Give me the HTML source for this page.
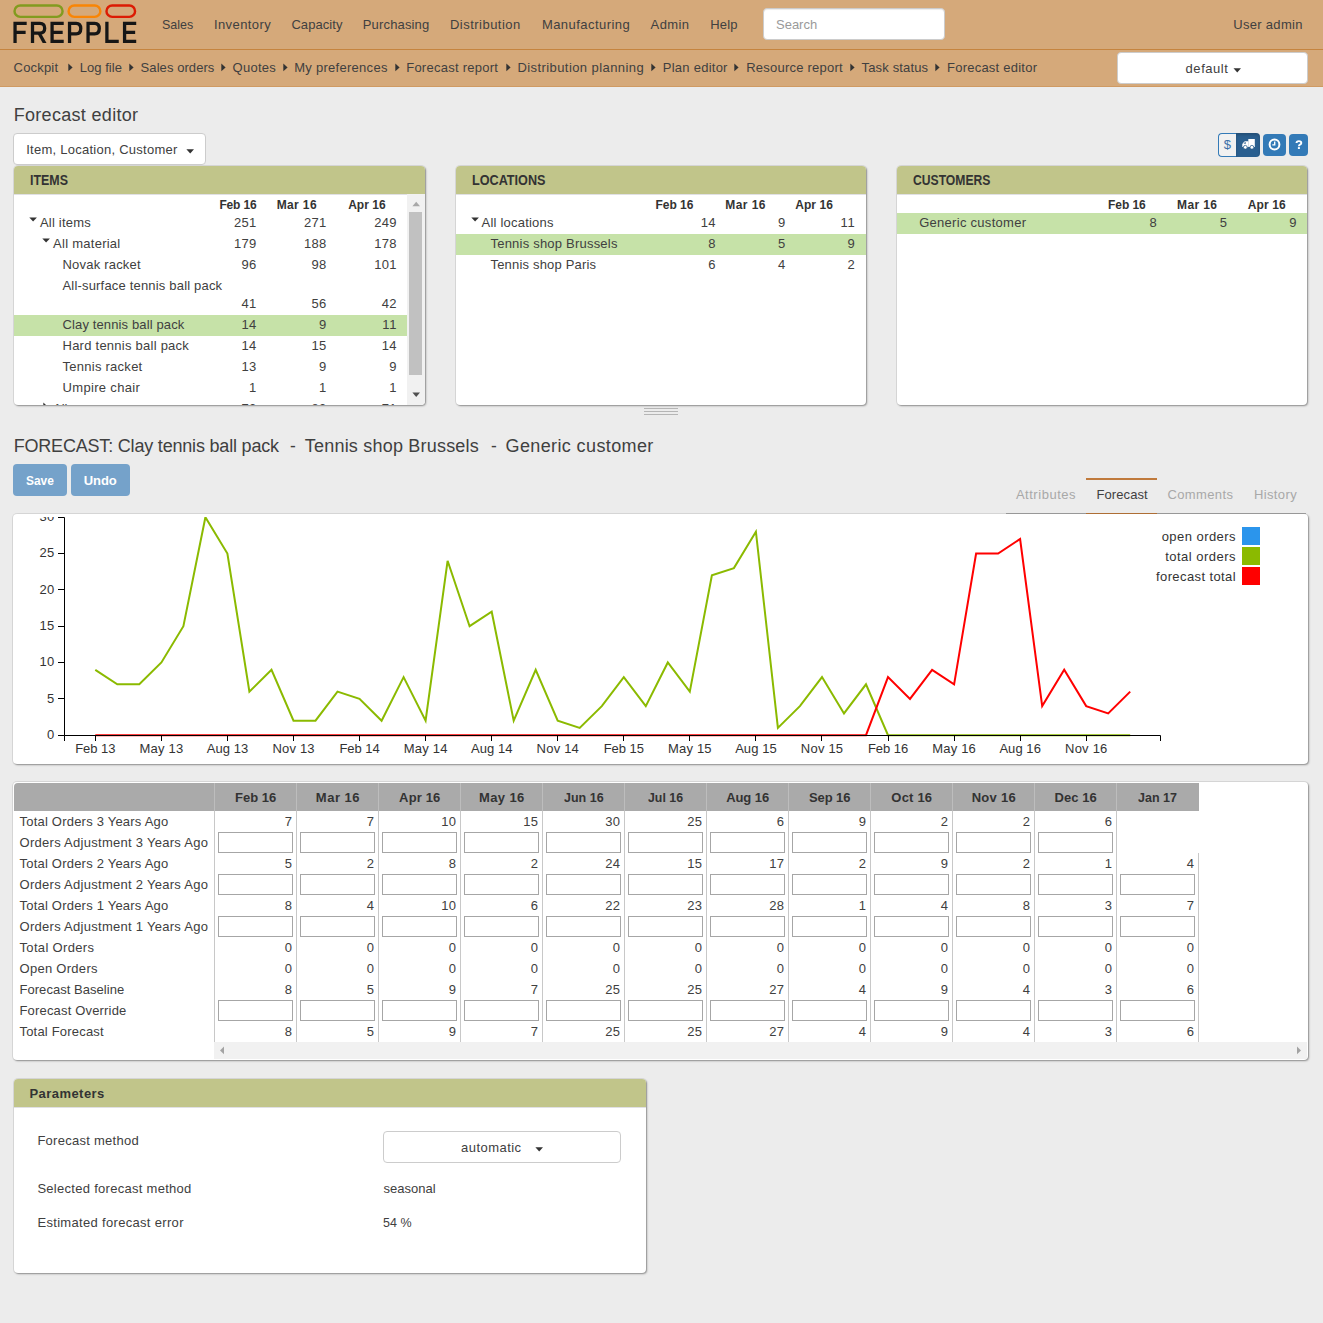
<!DOCTYPE html><html><head><meta charset="utf-8"><title>Forecast editor - frePPLe</title><style>
html,body{margin:0;padding:0;}
body{width:1323px;height:1323px;background:#ececec;font-family:"Liberation Sans",sans-serif;font-size:13px;color:#404040;position:relative;overflow:hidden;}
.t{position:absolute;white-space:pre;line-height:20px;}
.abs{position:absolute;}
.panel{position:absolute;background:#fff;border-radius:4px;box-shadow:0 0 0 1px rgba(0,0,0,.075), 1px 1px 2px rgba(0,0,0,.36);}
.phead{position:absolute;left:0;top:0;right:0;height:28px;background:#c1c58a;border-radius:4px 4px 0 0;border-bottom:1px solid #e0e0e4;}
.hl{position:absolute;background:#c6e2a8;}
.inp{position:absolute;box-sizing:border-box;width:75px;height:21px;border:1px solid #a6a6a6;background:#fff;}
.vsep{position:absolute;width:1px;background:#c8c8c8;}
.btn{position:absolute;box-sizing:border-box;border-radius:4px;}
</style></head><body>
<header class="abs" style="left:0;top:0;width:1323px;height:87px;background:#d5a97a;">
<div class="abs" style="left:0;top:49px;width:1323px;height:1px;background:#c5843f;"></div>
<div class="abs" style="left:0;top:86px;width:1323px;height:1px;background:#cf9a63;"></div>
<svg class="abs" style="left:5px;top:0;" width="140" height="50" viewBox="0 0 1323 472">
<g fill="none" stroke-width="23">
<rect x="90" y="51" width="454" height="108" rx="54" stroke="#829b1f"/>
<rect x="601" y="51" width="300" height="108" rx="54" stroke="#f98505"/>
<rect x="959" y="51" width="270" height="108" rx="54" stroke="#dc1b03"/>
</g>
<g fill="none" stroke="#161616" stroke-width="31" stroke-linejoin="miter">
<path d="M95 405V220H205M95 306H195"/>
<path d="M260 405V220H330Q375 220 375 266Q375 312 330 312H260"/><path d="M308 318H343L392 405H356Z" fill="#161616" stroke="none"/>
<path d="M555 220H445V390H555M445 305H545"/>
<path d="M610 405V220H672Q716 220 716 270Q716 320 672 320H610"/>
<path d="M785 405V220H847Q891 220 891 270Q891 320 847 320H785"/>
<path d="M963 205V390H1075"/>
<path d="M1240 220H1130V390H1240M1130 305H1230"/>
</g></svg>
<nav>
<span class="t" style="left:162.00px;top:15.00px;font-size:13px;letter-spacing:0.000px;color:#404040;transform:scaleX(0.9591);transform-origin:0 0;">Sales</span>
<span class="t" style="left:213.90px;top:15.00px;font-size:13px;letter-spacing:0.424px;color:#404040;">Inventory</span>
<span class="t" style="left:291.40px;top:15.00px;font-size:13px;letter-spacing:0.078px;color:#404040;">Capacity</span>
<span class="t" style="left:362.80px;top:15.00px;font-size:13px;letter-spacing:0.155px;color:#404040;">Purchasing</span>
<span class="t" style="left:450.00px;top:15.00px;font-size:13px;letter-spacing:0.472px;color:#404040;">Distribution</span>
<span class="t" style="left:541.90px;top:15.00px;font-size:13px;letter-spacing:0.455px;color:#404040;">Manufacturing</span>
<span class="t" style="left:650.60px;top:15.00px;font-size:13px;letter-spacing:0.408px;color:#404040;">Admin</span>
<span class="t" style="left:710.20px;top:15.00px;font-size:13px;letter-spacing:0.188px;color:#404040;">Help</span>
</nav>
<div class="abs" style="left:763px;top:8px;width:182px;height:32px;background:#fff;border-radius:4px;box-sizing:border-box;border:1px solid #ccc;box-shadow:inset 0 1px 1px rgba(0,0,0,.075);"></div>
<span class="t" style="left:776.00px;top:15.00px;font-size:13px;letter-spacing:-0.012px;color:#9a9a9a;">Search</span>
<span class="t" style="left:1233.20px;top:15.00px;font-size:13px;letter-spacing:0.313px;color:#404040;">User admin</span>
<span class="t" style="left:13.60px;top:58.00px;font-size:13px;letter-spacing:0.177px;color:#404040;">Cockpit</span>
<svg class="abs" style="left:67.6px;top:63px;" width="6" height="9" viewBox="0 0 6 9"><path d="M0.3 0.6L4.6 4.4L0.3 8.2Z" fill="#333"/></svg>
<span class="t" style="left:79.70px;top:58.00px;font-size:13px;letter-spacing:0.047px;color:#404040;">Log file</span>
<svg class="abs" style="left:129.0px;top:63px;" width="6" height="9" viewBox="0 0 6 9"><path d="M0.3 0.6L4.6 4.4L0.3 8.2Z" fill="#333"/></svg>
<span class="t" style="left:140.60px;top:58.00px;font-size:13px;letter-spacing:0.068px;color:#404040;">Sales orders</span>
<svg class="abs" style="left:221.0px;top:63px;" width="6" height="9" viewBox="0 0 6 9"><path d="M0.3 0.6L4.6 4.4L0.3 8.2Z" fill="#333"/></svg>
<span class="t" style="left:232.60px;top:58.00px;font-size:13px;letter-spacing:0.246px;color:#404040;">Quotes</span>
<svg class="abs" style="left:283.0px;top:63px;" width="6" height="9" viewBox="0 0 6 9"><path d="M0.3 0.6L4.6 4.4L0.3 8.2Z" fill="#333"/></svg>
<span class="t" style="left:294.20px;top:58.00px;font-size:13px;letter-spacing:0.279px;color:#404040;">My preferences</span>
<svg class="abs" style="left:395.0px;top:63px;" width="6" height="9" viewBox="0 0 6 9"><path d="M0.3 0.6L4.6 4.4L0.3 8.2Z" fill="#333"/></svg>
<span class="t" style="left:406.20px;top:58.00px;font-size:13px;letter-spacing:0.256px;color:#404040;">Forecast report</span>
<svg class="abs" style="left:505.7px;top:63px;" width="6" height="9" viewBox="0 0 6 9"><path d="M0.3 0.6L4.6 4.4L0.3 8.2Z" fill="#333"/></svg>
<span class="t" style="left:517.40px;top:58.00px;font-size:13px;letter-spacing:0.424px;color:#404040;">Distribution planning</span>
<svg class="abs" style="left:650.9px;top:63px;" width="6" height="9" viewBox="0 0 6 9"><path d="M0.3 0.6L4.6 4.4L0.3 8.2Z" fill="#333"/></svg>
<span class="t" style="left:662.80px;top:58.00px;font-size:13px;letter-spacing:0.249px;color:#404040;">Plan editor</span>
<svg class="abs" style="left:734.4px;top:63px;" width="6" height="9" viewBox="0 0 6 9"><path d="M0.3 0.6L4.6 4.4L0.3 8.2Z" fill="#333"/></svg>
<span class="t" style="left:746.20px;top:58.00px;font-size:13px;letter-spacing:0.232px;color:#404040;">Resource report</span>
<svg class="abs" style="left:850.0px;top:63px;" width="6" height="9" viewBox="0 0 6 9"><path d="M0.3 0.6L4.6 4.4L0.3 8.2Z" fill="#333"/></svg>
<span class="t" style="left:861.60px;top:58.00px;font-size:13px;letter-spacing:0.143px;color:#404040;">Task status</span>
<svg class="abs" style="left:935.2px;top:63px;" width="6" height="9" viewBox="0 0 6 9"><path d="M0.3 0.6L4.6 4.4L0.3 8.2Z" fill="#333"/></svg>
<span class="t" style="left:947.00px;top:58.00px;font-size:13px;letter-spacing:0.233px;color:#404040;">Forecast editor</span>
<div class="abs" style="left:1117px;top:52px;width:191px;height:32px;background:#fff;border-radius:4px;box-sizing:border-box;border:1px solid #ccc;"></div>
<span class="t" style="left:1185.60px;top:59.00px;font-size:13px;letter-spacing:0.536px;color:#404040;">default</span>
<svg class="abs" style="left:1232.5px;top:67.6px;" width="9" height="5" viewBox="0 0 9 5"><path d="M0.5 0.3H8L4.25 4.5Z" fill="#333"/></svg>
</header>
<span class="t" style="left:13.70px;top:105.00px;font-size:18px;letter-spacing:0.309px;color:#404040;">Forecast editor</span>
<div class="btn" style="left:13px;top:133px;width:193px;height:32px;background:#fff;border:1px solid #ccc;"></div>
<span class="t" style="left:26.20px;top:140.00px;font-size:13px;letter-spacing:0.257px;color:#404040;">Item, Location, Customer</span>
<svg class="abs" style="left:185.5px;top:149px;" width="9" height="5" viewBox="0 0 9 5"><path d="M0.4 0.3H8L4.2 4.5Z" fill="#333"/></svg>
<div class="btn" style="left:1218px;top:133px;width:18px;height:24px;background:#f1f1f1;border:1px solid #337ab7;border-radius:4px 0 0 4px;border-right:none;"></div>
<div class="btn" style="left:1236px;top:133px;width:24px;height:24px;background:#2a5f8f;border-radius:0 4px 4px 0;box-shadow:inset 0 2px 3px rgba(0,0,0,.18);"></div>
<div class="btn" style="left:1263px;top:134px;width:23px;height:22px;background:#337ab7;"></div>
<div class="btn" style="left:1289px;top:134px;width:19px;height:22px;background:#337ab7;"></div>
<span class="t" style="left:1223.80px;top:135.00px;font-size:13px;letter-spacing:-0.004px;color:#3b6fa8;">$</span>
<svg class="abs" style="left:1242px;top:139px;" width="13" height="10" viewBox="0 0 13 10">
<path d="M6.3 0H12.8V8H6.3Z" fill="#fff"/><path d="M6.4 2.2H3.1Q2.5 2.2 2.1 2.7L0.3 4.9V8H6.4Z" fill="#fff"/>
<circle cx="3.3" cy="8.3" r="1.9" fill="#fff" stroke="#2a5f8f" stroke-width="0.8"/><circle cx="9.9" cy="8.3" r="1.9" fill="#fff" stroke="#2a5f8f" stroke-width="0.8"/>
<path d="M1.5 4.7L2.7 3.2H4V4.7Z" fill="#2a5f8f" opacity="0.8"/></svg>
<svg class="abs" style="left:1268px;top:138px;" width="13" height="13" viewBox="0 0 13 13"><circle cx="6.5" cy="6.5" r="4.9" fill="none" stroke="#fff" stroke-width="2"/><path d="M6.7 3.4V6.9H4.3" fill="none" stroke="#fff" stroke-width="1.4"/></svg>
<svg class="abs" style="left:1295px;top:140px;" width="8" height="10" viewBox="0 0 8 10"><path d="M1.5 3.1Q1.5 1.1 3.9 1.1Q6.3 1.1 6.3 3Q6.3 4.1 5 4.7Q3.9 5.2 3.9 6.3" fill="none" stroke="#fff" stroke-width="1.9"/><rect x="2.9" y="7.1" width="2" height="1.9" fill="#fff"/></svg>
<section class="panel" style="left:14px;top:166px;width:411px;height:239px;"><div class="phead"></div></section>
<span class="t" style="left:29.50px;top:170.00px;font-size:14px;letter-spacing:0.000px;color:#333;font-weight:700;transform:scaleX(0.8859);transform-origin:0 0;">ITEMS</span>
<section class="panel" style="left:456px;top:166px;width:410px;height:239px;"><div class="phead"></div></section>
<span class="t" style="left:471.60px;top:170.00px;font-size:14px;letter-spacing:0.000px;color:#333;font-weight:700;transform:scaleX(0.9029);transform-origin:0 0;">LOCATIONS</span>
<section class="panel" style="left:897px;top:166px;width:410px;height:239px;"><div class="phead"></div></section>
<span class="t" style="left:912.60px;top:170.00px;font-size:14px;letter-spacing:0.000px;color:#333;font-weight:700;transform:scaleX(0.8677);transform-origin:0 0;">CUSTOMERS</span>
<span class="t" style="left:219.40px;top:195.00px;font-size:12px;letter-spacing:-0.136px;color:#333;font-weight:700;">Feb 16</span>
<span class="t" style="left:276.70px;top:195.00px;font-size:12px;letter-spacing:0.378px;color:#333;font-weight:700;">Mar 16</span>
<span class="t" style="left:348.20px;top:195.00px;font-size:12px;letter-spacing:0.007px;color:#333;font-weight:700;">Apr 16</span>
<div class="hl" style="left:14px;top:315px;width:393px;height:21px;"></div>
<svg class="abs" style="left:29.0px;top:216.8px;" width="9" height="6" viewBox="0 0 9 6"><path d="M0.3 0.4H7.9L4.1 4.6Z" fill="#333"/></svg>
<svg class="abs" style="left:41.8px;top:237.8px;" width="9" height="6" viewBox="0 0 9 6"><path d="M0.3 0.4H7.9L4.1 4.6Z" fill="#333"/></svg>
<span class="t" style="left:39.90px;top:213.00px;font-size:13px;letter-spacing:0.219px;color:#404040;">All items</span>
<span class="t" style="left:234.10px;top:213.00px;font-size:13px;letter-spacing:0.199px;color:#404040;">251</span>
<span class="t" style="left:304.10px;top:213.00px;font-size:13px;letter-spacing:0.199px;color:#404040;">271</span>
<span class="t" style="left:374.30px;top:213.00px;font-size:13px;letter-spacing:0.199px;color:#404040;">249</span>
<span class="t" style="left:53.10px;top:234.00px;font-size:13px;letter-spacing:0.259px;color:#404040;">All material</span>
<span class="t" style="left:234.10px;top:234.00px;font-size:13px;letter-spacing:0.199px;color:#404040;">179</span>
<span class="t" style="left:304.10px;top:234.00px;font-size:13px;letter-spacing:0.199px;color:#404040;">188</span>
<span class="t" style="left:374.30px;top:234.00px;font-size:13px;letter-spacing:0.199px;color:#404040;">178</span>
<span class="t" style="left:62.50px;top:255.00px;font-size:13px;letter-spacing:0.202px;color:#404040;">Novak racket</span>
<span class="t" style="left:241.53px;top:255.00px;font-size:13px;letter-spacing:0.199px;color:#404040;">96</span>
<span class="t" style="left:311.53px;top:255.00px;font-size:13px;letter-spacing:0.199px;color:#404040;">98</span>
<span class="t" style="left:374.30px;top:255.00px;font-size:13px;letter-spacing:0.199px;color:#404040;">101</span>
<span class="t" style="left:62.50px;top:276.00px;font-size:13px;letter-spacing:0.184px;color:#404040;">All-surface tennis ball pack</span>
<span class="t" style="left:241.53px;top:294.00px;font-size:13px;letter-spacing:0.199px;color:#404040;">41</span>
<span class="t" style="left:311.53px;top:294.00px;font-size:13px;letter-spacing:0.199px;color:#404040;">56</span>
<span class="t" style="left:381.73px;top:294.00px;font-size:13px;letter-spacing:0.199px;color:#404040;">42</span>
<span class="t" style="left:62.50px;top:315.00px;font-size:13px;letter-spacing:0.127px;color:#404040;">Clay tennis ball pack</span>
<span class="t" style="left:241.53px;top:315.00px;font-size:13px;letter-spacing:0.199px;color:#404040;">14</span>
<span class="t" style="left:318.97px;top:315.00px;font-size:13px;letter-spacing:0.199px;color:#404040;">9</span>
<span class="t" style="left:382.22px;top:315.00px;font-size:13px;letter-spacing:0.683px;color:#404040;">11</span>
<span class="t" style="left:62.50px;top:336.00px;font-size:13px;letter-spacing:0.247px;color:#404040;">Hard tennis ball pack</span>
<span class="t" style="left:241.53px;top:336.00px;font-size:13px;letter-spacing:0.199px;color:#404040;">14</span>
<span class="t" style="left:311.53px;top:336.00px;font-size:13px;letter-spacing:0.199px;color:#404040;">15</span>
<span class="t" style="left:381.73px;top:336.00px;font-size:13px;letter-spacing:0.199px;color:#404040;">14</span>
<span class="t" style="left:62.50px;top:357.00px;font-size:13px;letter-spacing:0.262px;color:#404040;">Tennis racket</span>
<span class="t" style="left:241.53px;top:357.00px;font-size:13px;letter-spacing:0.199px;color:#404040;">13</span>
<span class="t" style="left:318.97px;top:357.00px;font-size:13px;letter-spacing:0.199px;color:#404040;">9</span>
<span class="t" style="left:389.17px;top:357.00px;font-size:13px;letter-spacing:0.199px;color:#404040;">9</span>
<span class="t" style="left:62.50px;top:378.00px;font-size:13px;letter-spacing:0.334px;color:#404040;">Umpire chair</span>
<span class="t" style="left:248.97px;top:378.00px;font-size:13px;letter-spacing:0.199px;color:#404040;">1</span>
<span class="t" style="left:318.97px;top:378.00px;font-size:13px;letter-spacing:0.199px;color:#404040;">1</span>
<span class="t" style="left:389.17px;top:378.00px;font-size:13px;letter-spacing:0.199px;color:#404040;">1</span>
<div class="abs" style="left:14px;top:396px;width:393px;height:9px;overflow:hidden;">
<div class="abs" style="left:-14px;top:-396px;">
<svg class="abs" style="left:42.5px;top:402px;" width="6" height="9" viewBox="0 0 6 9"><path d="M0.3 0.6L4.6 4.4L0.3 8.2Z" fill="#333"/></svg>
<span class="t" style="left:53.10px;top:399.00px;font-size:13px;letter-spacing:-0.105px;color:#404040;">All access</span>
<span class="t" style="left:241.53px;top:399.00px;font-size:13px;letter-spacing:0.199px;color:#404040;">72</span>
<span class="t" style="left:311.53px;top:399.00px;font-size:13px;letter-spacing:0.199px;color:#404040;">83</span>
<span class="t" style="left:381.73px;top:399.00px;font-size:13px;letter-spacing:0.199px;color:#404040;">71</span>
</div></div>
<div class="abs" style="left:407px;top:194px;width:18px;height:211px;background:#f1f1f1;border-radius:0 0 4px 0;"></div>
<div class="abs" style="left:409px;top:212px;width:13px;height:163px;background:#c1c1c1;"></div>
<svg class="abs" style="left:411.5px;top:201px;" width="9" height="6" viewBox="0 0 9 6"><path d="M0.4 5.2L4.2 0.8L8 5.2Z" fill="#a8a8a8"/></svg>
<svg class="abs" style="left:411.5px;top:392.3px;" width="9" height="6" viewBox="0 0 9 6"><path d="M0.4 0.6H8L4.2 5Z" fill="#505050"/></svg>
<span class="t" style="left:655.50px;top:195.00px;font-size:12px;letter-spacing:-0.019px;color:#333;font-weight:700;">Feb 16</span>
<span class="t" style="left:725.30px;top:195.00px;font-size:12px;letter-spacing:0.428px;color:#333;font-weight:700;">Mar 16</span>
<span class="t" style="left:795.20px;top:195.00px;font-size:12px;letter-spacing:0.090px;color:#333;font-weight:700;">Apr 16</span>
<div class="hl" style="left:456px;top:234px;width:410px;height:21px;"></div>
<svg class="abs" style="left:470.8px;top:216.8px;" width="9" height="6" viewBox="0 0 9 6"><path d="M0.3 0.4H7.9L4.1 4.6Z" fill="#333"/></svg>
<span class="t" style="left:481.60px;top:213.00px;font-size:13px;letter-spacing:0.210px;color:#404040;">All locations</span>
<span class="t" style="left:700.73px;top:213.00px;font-size:13px;letter-spacing:0.199px;color:#404040;">14</span>
<span class="t" style="left:777.97px;top:213.00px;font-size:13px;letter-spacing:0.199px;color:#404040;">9</span>
<span class="t" style="left:840.62px;top:213.00px;font-size:13px;letter-spacing:0.683px;color:#404040;">11</span>
<span class="t" style="left:490.50px;top:234.00px;font-size:13px;letter-spacing:0.213px;color:#404040;">Tennis shop Brussels</span>
<span class="t" style="left:708.17px;top:234.00px;font-size:13px;letter-spacing:0.199px;color:#404040;">8</span>
<span class="t" style="left:777.97px;top:234.00px;font-size:13px;letter-spacing:0.199px;color:#404040;">5</span>
<span class="t" style="left:847.57px;top:234.00px;font-size:13px;letter-spacing:0.199px;color:#404040;">9</span>
<span class="t" style="left:490.50px;top:255.00px;font-size:13px;letter-spacing:0.187px;color:#404040;">Tennis shop Paris</span>
<span class="t" style="left:708.17px;top:255.00px;font-size:13px;letter-spacing:0.199px;color:#404040;">6</span>
<span class="t" style="left:777.97px;top:255.00px;font-size:13px;letter-spacing:0.199px;color:#404040;">4</span>
<span class="t" style="left:847.57px;top:255.00px;font-size:13px;letter-spacing:0.199px;color:#404040;">2</span>
<div class="abs" style="left:644px;top:408px;width:34px;height:1px;background:#b5b5b5;"></div>
<div class="abs" style="left:644px;top:411px;width:34px;height:1px;background:#b5b5b5;"></div>
<div class="abs" style="left:644px;top:414px;width:34px;height:1px;background:#b5b5b5;"></div>
<span class="t" style="left:1108.10px;top:195.00px;font-size:12px;letter-spacing:-0.069px;color:#333;font-weight:700;">Feb 16</span>
<span class="t" style="left:1177.00px;top:195.00px;font-size:12px;letter-spacing:0.395px;color:#333;font-weight:700;">Mar 16</span>
<span class="t" style="left:1247.80px;top:195.00px;font-size:12px;letter-spacing:0.090px;color:#333;font-weight:700;">Apr 16</span>
<div class="hl" style="left:897px;top:213px;width:410px;height:21px;"></div>
<span class="t" style="left:919.20px;top:213.00px;font-size:13px;letter-spacing:0.282px;color:#404040;">Generic customer</span>
<span class="t" style="left:1149.57px;top:213.00px;font-size:13px;letter-spacing:0.199px;color:#404040;">8</span>
<span class="t" style="left:1219.67px;top:213.00px;font-size:13px;letter-spacing:0.199px;color:#404040;">5</span>
<span class="t" style="left:1289.27px;top:213.00px;font-size:13px;letter-spacing:0.199px;color:#404040;">9</span>
<span class="t" style="left:13.70px;top:436.00px;font-size:18px;letter-spacing:-0.191px;color:#404040;">FORECAST: Clay tennis ball pack</span>
<span class="t" style="left:289.60px;top:436.00px;font-size:18px;letter-spacing:0.000px;color:#404040;transform:scaleX(0.9653);transform-origin:0 0;">-</span>
<span class="t" style="left:304.80px;top:436.00px;font-size:18px;letter-spacing:0.205px;color:#404040;">Tennis shop Brussels</span>
<span class="t" style="left:490.80px;top:436.00px;font-size:18px;letter-spacing:0.000px;color:#404040;transform:scaleX(0.9653);transform-origin:0 0;">-</span>
<span class="t" style="left:505.50px;top:436.00px;font-size:18px;letter-spacing:0.384px;color:#404040;">Generic customer</span>
<div class="btn" style="left:13px;top:464px;width:54px;height:32px;background:#75a2ca;"></div>
<div class="btn" style="left:71px;top:464px;width:59px;height:32px;background:#75a2ca;"></div>
<span class="t" style="left:26.20px;top:471.00px;font-size:13px;letter-spacing:0.000px;color:#fff;font-weight:700;transform:scaleX(0.9185);transform-origin:0 0;">Save</span>
<span class="t" style="left:83.80px;top:471.00px;font-size:13px;letter-spacing:-0.080px;color:#fff;font-weight:700;">Undo</span>
<div class="abs" style="left:1006px;top:513px;width:300px;height:1px;background:#a9a9a9;"></div>
<div class="abs" style="left:1086px;top:478px;width:71px;height:2px;background:#c07a3c;"></div>
<div class="abs" style="left:1086px;top:512.5px;width:71px;height:1.5px;background:#c07a3c;"></div>
<span class="t" style="left:1015.90px;top:485.00px;font-size:13px;letter-spacing:0.528px;color:#a8a8a8;">Attributes</span>
<span class="t" style="left:1096.50px;top:485.00px;font-size:13px;letter-spacing:0.090px;color:#404040;">Forecast</span>
<span class="t" style="left:1167.40px;top:485.00px;font-size:13px;letter-spacing:0.393px;color:#a8a8a8;">Comments</span>
<span class="t" style="left:1254.00px;top:485.00px;font-size:13px;letter-spacing:0.364px;color:#a8a8a8;">History</span>
<section class="panel" style="left:13px;top:514px;width:1295px;height:250px;"></section>
<svg class="abs" style="left:0;top:517px;" width="1323" height="250" viewBox="0 517 1323 250"><polyline points="95.3,669.8 117.3,684.3 139.3,684.3 161.4,662.5 183.4,626.2 205.4,517.2 227.4,553.5 249.4,691.6 271.5,669.8 293.5,720.7 315.5,720.7 337.5,691.6 359.5,698.9 381.6,720.7 403.6,677.1 425.6,720.7 447.6,560.8 469.6,626.2 491.7,611.7 513.7,720.7 535.7,669.8 557.7,720.7 579.7,727.9 601.8,706.1 623.8,677.1 645.8,706.1 667.8,662.5 689.8,691.6 711.9,575.3 733.9,568.1 755.9,531.7 777.9,727.9 799.9,706.1 822.0,677.1 844.0,713.4 866.0,684.3 888.0,735.2 910.0,735.2 932.1,735.2 954.1,735.2 976.1,735.2 998.1,735.2 1020.1,735.2 1042.2,735.2 1064.2,735.2 1086.2,735.2 1108.2,735.2 1130.2,735.2" fill="none" stroke="#8bba00" stroke-width="2"/><polyline points="95.3,735.2 117.3,735.2 139.3,735.2 161.4,735.2 183.4,735.2 205.4,735.2 227.4,735.2 249.4,735.2 271.5,735.2 293.5,735.2 315.5,735.2 337.5,735.2 359.5,735.2 381.6,735.2 403.6,735.2 425.6,735.2 447.6,735.2 469.6,735.2 491.7,735.2 513.7,735.2 535.7,735.2 557.7,735.2 579.7,735.2 601.8,735.2 623.8,735.2 645.8,735.2 667.8,735.2 689.8,735.2 711.9,735.2 733.9,735.2 755.9,735.2 777.9,735.2 799.9,735.2 822.0,735.2 844.0,735.2 866.0,735.2 888.0,677.1 910.0,698.9 932.1,669.8 954.1,684.3 976.1,553.5 998.1,553.5 1020.1,539.0 1042.2,706.1 1064.2,669.8 1086.2,706.1 1108.2,713.4 1130.2,691.6" fill="none" stroke="#ff0000" stroke-width="2"/><path d="M58 517.5H64.5V735.5H58" fill="none" stroke="#000" stroke-width="1"/><path d="M58 698.5H64.5" stroke="#000" stroke-width="1"/><path d="M58 662.5H64.5" stroke="#000" stroke-width="1"/><path d="M58 626.5H64.5" stroke="#000" stroke-width="1"/><path d="M58 589.5H64.5" stroke="#000" stroke-width="1"/><path d="M58 553.5H64.5" stroke="#000" stroke-width="1"/><path d="M64.5 741V735.5H1160.5V741" fill="none" stroke="#000" stroke-width="1"/><path d="M95.5 735.5V741" stroke="#000" stroke-width="1"/><path d="M161.5 735.5V741" stroke="#000" stroke-width="1"/><path d="M227.5 735.5V741" stroke="#000" stroke-width="1"/><path d="M293.5 735.5V741" stroke="#000" stroke-width="1"/><path d="M359.5 735.5V741" stroke="#000" stroke-width="1"/><path d="M425.5 735.5V741" stroke="#000" stroke-width="1"/><path d="M491.5 735.5V741" stroke="#000" stroke-width="1"/><path d="M557.5 735.5V741" stroke="#000" stroke-width="1"/><path d="M623.5 735.5V741" stroke="#000" stroke-width="1"/><path d="M689.5 735.5V741" stroke="#000" stroke-width="1"/><path d="M755.5 735.5V741" stroke="#000" stroke-width="1"/><path d="M821.5 735.5V741" stroke="#000" stroke-width="1"/><path d="M888.5 735.5V741" stroke="#000" stroke-width="1"/><path d="M954.5 735.5V741" stroke="#000" stroke-width="1"/><path d="M1020.5 735.5V741" stroke="#000" stroke-width="1"/><path d="M1086.5 735.5V741" stroke="#000" stroke-width="1"/></svg>
<div class="abs" style="left:0;top:517px;width:64px;height:20px;overflow:hidden;"><div class="abs" style="left:0;top:-517px;">
<span class="t" style="left:39.53px;top:507.00px;font-size:13px;letter-spacing:0.199px;color:#333;">30</span>
</div></div>
<span class="t" style="left:46.97px;top:725.00px;font-size:13px;letter-spacing:0.199px;color:#333;">0</span>
<span class="t" style="left:46.97px;top:689.00px;font-size:13px;letter-spacing:0.199px;color:#333;">5</span>
<span class="t" style="left:39.53px;top:652.00px;font-size:13px;letter-spacing:0.199px;color:#333;">10</span>
<span class="t" style="left:39.53px;top:616.00px;font-size:13px;letter-spacing:0.199px;color:#333;">15</span>
<span class="t" style="left:39.53px;top:580.00px;font-size:13px;letter-spacing:0.199px;color:#333;">20</span>
<span class="t" style="left:39.53px;top:543.00px;font-size:13px;letter-spacing:0.199px;color:#333;">25</span>
<span class="t" style="left:75.17px;top:739.00px;font-size:13px;letter-spacing:-0.045px;color:#333;">Feb 13</span>
<span class="t" style="left:139.59px;top:739.00px;font-size:13px;letter-spacing:0.180px;color:#333;">May 13</span>
<span class="t" style="left:206.67px;top:739.00px;font-size:13px;letter-spacing:0.061px;color:#333;">Aug 13</span>
<span class="t" style="left:272.38px;top:739.00px;font-size:13px;letter-spacing:0.201px;color:#333;">Nov 13</span>
<span class="t" style="left:339.41px;top:739.00px;font-size:13px;letter-spacing:-0.045px;color:#333;">Feb 14</span>
<span class="t" style="left:403.83px;top:739.00px;font-size:13px;letter-spacing:0.180px;color:#333;">May 14</span>
<span class="t" style="left:470.91px;top:739.00px;font-size:13px;letter-spacing:0.061px;color:#333;">Aug 14</span>
<span class="t" style="left:536.62px;top:739.00px;font-size:13px;letter-spacing:0.201px;color:#333;">Nov 14</span>
<span class="t" style="left:603.65px;top:739.00px;font-size:13px;letter-spacing:-0.045px;color:#333;">Feb 15</span>
<span class="t" style="left:668.07px;top:739.00px;font-size:13px;letter-spacing:0.180px;color:#333;">May 15</span>
<span class="t" style="left:735.15px;top:739.00px;font-size:13px;letter-spacing:0.061px;color:#333;">Aug 15</span>
<span class="t" style="left:800.86px;top:739.00px;font-size:13px;letter-spacing:0.201px;color:#333;">Nov 15</span>
<span class="t" style="left:867.89px;top:739.00px;font-size:13px;letter-spacing:-0.045px;color:#333;">Feb 16</span>
<span class="t" style="left:932.31px;top:739.00px;font-size:13px;letter-spacing:0.180px;color:#333;">May 16</span>
<span class="t" style="left:999.39px;top:739.00px;font-size:13px;letter-spacing:0.061px;color:#333;">Aug 16</span>
<span class="t" style="left:1065.10px;top:739.00px;font-size:13px;letter-spacing:0.201px;color:#333;">Nov 16</span>
<div class="abs" style="left:1242px;top:527px;width:18px;height:18px;background:#2b95ec;"></div>
<span class="t" style="left:1161.66px;top:527.00px;font-size:13px;letter-spacing:0.455px;color:#333;">open orders</span>
<div class="abs" style="left:1242px;top:547px;width:18px;height:18px;background:#8bba00;"></div>
<span class="t" style="left:1165.23px;top:547.00px;font-size:13px;letter-spacing:0.484px;color:#333;">total orders</span>
<div class="abs" style="left:1242px;top:567px;width:18px;height:18px;background:#ff0000;"></div>
<span class="t" style="left:1156.00px;top:567.00px;font-size:13px;letter-spacing:0.397px;color:#333;">forecast total</span>
<section class="panel" style="left:13px;top:782px;width:1295px;height:278px;"><div class="abs" style="left:1px;top:1px;">
<div class="abs" style="left:0;top:0;width:1185px;height:28px;background:#aaaaaa;border-radius:4px 0 0 0;"></div>
<div class="vsep" style="left:200px;top:0;height:28px;background:#bdbdbd;"></div>
<div class="vsep" style="left:200px;top:28px;height:231px;"></div>
<div class="vsep" style="left:282px;top:0;height:28px;background:#bdbdbd;"></div>
<div class="vsep" style="left:282px;top:28px;height:231px;"></div>
<div class="vsep" style="left:364px;top:0;height:28px;background:#bdbdbd;"></div>
<div class="vsep" style="left:364px;top:28px;height:231px;"></div>
<div class="vsep" style="left:446px;top:0;height:28px;background:#bdbdbd;"></div>
<div class="vsep" style="left:446px;top:28px;height:231px;"></div>
<div class="vsep" style="left:528px;top:0;height:28px;background:#bdbdbd;"></div>
<div class="vsep" style="left:528px;top:28px;height:231px;"></div>
<div class="vsep" style="left:610px;top:0;height:28px;background:#bdbdbd;"></div>
<div class="vsep" style="left:610px;top:28px;height:231px;"></div>
<div class="vsep" style="left:692px;top:0;height:28px;background:#bdbdbd;"></div>
<div class="vsep" style="left:692px;top:28px;height:231px;"></div>
<div class="vsep" style="left:774px;top:0;height:28px;background:#bdbdbd;"></div>
<div class="vsep" style="left:774px;top:28px;height:231px;"></div>
<div class="vsep" style="left:856px;top:0;height:28px;background:#bdbdbd;"></div>
<div class="vsep" style="left:856px;top:28px;height:231px;"></div>
<div class="vsep" style="left:938px;top:0;height:28px;background:#bdbdbd;"></div>
<div class="vsep" style="left:938px;top:28px;height:231px;"></div>
<div class="vsep" style="left:1020px;top:0;height:28px;background:#bdbdbd;"></div>
<div class="vsep" style="left:1020px;top:28px;height:231px;"></div>
<div class="vsep" style="left:1102px;top:0;height:28px;background:#bdbdbd;"></div>
<div class="vsep" style="left:1102px;top:28px;height:231px;"></div>
<div class="vsep" style="left:1184px;top:70px;height:189px;"></div>
<div class="abs" style="left:200px;top:259px;width:1093px;height:17px;background:#f1f1f1;"></div>
<svg class="abs" style="left:205px;top:263px;" width="6" height="9" viewBox="0 0 6 9"><path d="M5 0.6L1 4.4L5 8.2Z" fill="#a3a3a3"/></svg>
<svg class="abs" style="left:1282px;top:263px;" width="6" height="9" viewBox="0 0 6 9"><path d="M1 0.6L5 4.4L1 8.2Z" fill="#a3a3a3"/></svg>
</div></section>
<span class="t" style="left:235.08px;top:788.00px;font-size:13px;letter-spacing:0.012px;color:#333;font-weight:700;">Feb 16</span>
<span class="t" style="left:315.84px;top:788.00px;font-size:13px;letter-spacing:0.505px;color:#333;font-weight:700;">Mar 16</span>
<span class="t" style="left:399.11px;top:788.00px;font-size:13px;letter-spacing:0.141px;color:#333;font-weight:700;">Apr 16</span>
<span class="t" style="left:479.03px;top:788.00px;font-size:13px;letter-spacing:0.391px;color:#333;font-weight:700;">May 16</span>
<span class="t" style="left:563.90px;top:788.00px;font-size:13px;letter-spacing:0.000px;color:#333;font-weight:700;transform:scaleX(0.9617);transform-origin:0 0;">Jun 16</span>
<span class="t" style="left:648.18px;top:788.00px;font-size:13px;letter-spacing:0.000px;color:#333;font-weight:700;transform:scaleX(0.9504);transform-origin:0 0;">Jul 16</span>
<span class="t" style="left:726.14px;top:788.00px;font-size:13px;letter-spacing:-0.045px;color:#333;font-weight:700;">Aug 16</span>
<span class="t" style="left:809.00px;top:788.00px;font-size:13px;letter-spacing:-0.106px;color:#333;font-weight:700;">Sep 16</span>
<span class="t" style="left:891.35px;top:788.00px;font-size:13px;letter-spacing:0.190px;color:#333;font-weight:700;">Oct 16</span>
<span class="t" style="left:971.72px;top:788.00px;font-size:13px;letter-spacing:0.265px;color:#333;font-weight:700;">Nov 16</span>
<span class="t" style="left:1054.62px;top:788.00px;font-size:13px;letter-spacing:0.047px;color:#333;font-weight:700;">Dec 16</span>
<span class="t" style="left:1138.24px;top:788.00px;font-size:13px;letter-spacing:0.000px;color:#333;font-weight:700;transform:scaleX(0.9613);transform-origin:0 0;">Jan 17</span>
<span class="t" style="left:19.50px;top:812.00px;font-size:13px;letter-spacing:0.212px;color:#404040;">Total Orders 3 Years Ago</span>
<span class="t" style="left:284.67px;top:812.00px;font-size:13px;letter-spacing:0.199px;color:#404040;">7</span>
<span class="t" style="left:366.67px;top:812.00px;font-size:13px;letter-spacing:0.199px;color:#404040;">7</span>
<span class="t" style="left:441.23px;top:812.00px;font-size:13px;letter-spacing:0.199px;color:#404040;">10</span>
<span class="t" style="left:523.23px;top:812.00px;font-size:13px;letter-spacing:0.199px;color:#404040;">15</span>
<span class="t" style="left:605.23px;top:812.00px;font-size:13px;letter-spacing:0.199px;color:#404040;">30</span>
<span class="t" style="left:687.23px;top:812.00px;font-size:13px;letter-spacing:0.199px;color:#404040;">25</span>
<span class="t" style="left:776.67px;top:812.00px;font-size:13px;letter-spacing:0.199px;color:#404040;">6</span>
<span class="t" style="left:858.67px;top:812.00px;font-size:13px;letter-spacing:0.199px;color:#404040;">9</span>
<span class="t" style="left:940.67px;top:812.00px;font-size:13px;letter-spacing:0.199px;color:#404040;">2</span>
<span class="t" style="left:1022.67px;top:812.00px;font-size:13px;letter-spacing:0.199px;color:#404040;">2</span>
<span class="t" style="left:1104.67px;top:812.00px;font-size:13px;letter-spacing:0.199px;color:#404040;">6</span>
<span class="t" style="left:19.50px;top:833.00px;font-size:13px;letter-spacing:0.280px;color:#404040;">Orders Adjustment 3 Years Ago</span>
<div class="inp" style="left:218px;top:832px;"></div>
<div class="inp" style="left:300px;top:832px;"></div>
<div class="inp" style="left:382px;top:832px;"></div>
<div class="inp" style="left:464px;top:832px;"></div>
<div class="inp" style="left:546px;top:832px;"></div>
<div class="inp" style="left:628px;top:832px;"></div>
<div class="inp" style="left:710px;top:832px;"></div>
<div class="inp" style="left:792px;top:832px;"></div>
<div class="inp" style="left:874px;top:832px;"></div>
<div class="inp" style="left:956px;top:832px;"></div>
<div class="inp" style="left:1038px;top:832px;"></div>
<span class="t" style="left:19.50px;top:854.00px;font-size:13px;letter-spacing:0.212px;color:#404040;">Total Orders 2 Years Ago</span>
<span class="t" style="left:284.67px;top:854.00px;font-size:13px;letter-spacing:0.199px;color:#404040;">5</span>
<span class="t" style="left:366.67px;top:854.00px;font-size:13px;letter-spacing:0.199px;color:#404040;">2</span>
<span class="t" style="left:448.67px;top:854.00px;font-size:13px;letter-spacing:0.199px;color:#404040;">8</span>
<span class="t" style="left:530.67px;top:854.00px;font-size:13px;letter-spacing:0.199px;color:#404040;">2</span>
<span class="t" style="left:605.23px;top:854.00px;font-size:13px;letter-spacing:0.199px;color:#404040;">24</span>
<span class="t" style="left:687.23px;top:854.00px;font-size:13px;letter-spacing:0.199px;color:#404040;">15</span>
<span class="t" style="left:769.23px;top:854.00px;font-size:13px;letter-spacing:0.199px;color:#404040;">17</span>
<span class="t" style="left:858.67px;top:854.00px;font-size:13px;letter-spacing:0.199px;color:#404040;">2</span>
<span class="t" style="left:940.67px;top:854.00px;font-size:13px;letter-spacing:0.199px;color:#404040;">9</span>
<span class="t" style="left:1022.67px;top:854.00px;font-size:13px;letter-spacing:0.199px;color:#404040;">2</span>
<span class="t" style="left:1104.67px;top:854.00px;font-size:13px;letter-spacing:0.199px;color:#404040;">1</span>
<span class="t" style="left:1186.67px;top:854.00px;font-size:13px;letter-spacing:0.199px;color:#404040;">4</span>
<span class="t" style="left:19.50px;top:875.00px;font-size:13px;letter-spacing:0.280px;color:#404040;">Orders Adjustment 2 Years Ago</span>
<div class="inp" style="left:218px;top:874px;"></div>
<div class="inp" style="left:300px;top:874px;"></div>
<div class="inp" style="left:382px;top:874px;"></div>
<div class="inp" style="left:464px;top:874px;"></div>
<div class="inp" style="left:546px;top:874px;"></div>
<div class="inp" style="left:628px;top:874px;"></div>
<div class="inp" style="left:710px;top:874px;"></div>
<div class="inp" style="left:792px;top:874px;"></div>
<div class="inp" style="left:874px;top:874px;"></div>
<div class="inp" style="left:956px;top:874px;"></div>
<div class="inp" style="left:1038px;top:874px;"></div>
<div class="inp" style="left:1120px;top:874px;"></div>
<span class="t" style="left:19.50px;top:896.00px;font-size:13px;letter-spacing:0.212px;color:#404040;">Total Orders 1 Years Ago</span>
<span class="t" style="left:284.67px;top:896.00px;font-size:13px;letter-spacing:0.199px;color:#404040;">8</span>
<span class="t" style="left:366.67px;top:896.00px;font-size:13px;letter-spacing:0.199px;color:#404040;">4</span>
<span class="t" style="left:441.23px;top:896.00px;font-size:13px;letter-spacing:0.199px;color:#404040;">10</span>
<span class="t" style="left:530.67px;top:896.00px;font-size:13px;letter-spacing:0.199px;color:#404040;">6</span>
<span class="t" style="left:605.23px;top:896.00px;font-size:13px;letter-spacing:0.199px;color:#404040;">22</span>
<span class="t" style="left:687.23px;top:896.00px;font-size:13px;letter-spacing:0.199px;color:#404040;">23</span>
<span class="t" style="left:769.23px;top:896.00px;font-size:13px;letter-spacing:0.199px;color:#404040;">28</span>
<span class="t" style="left:858.67px;top:896.00px;font-size:13px;letter-spacing:0.199px;color:#404040;">1</span>
<span class="t" style="left:940.67px;top:896.00px;font-size:13px;letter-spacing:0.199px;color:#404040;">4</span>
<span class="t" style="left:1022.67px;top:896.00px;font-size:13px;letter-spacing:0.199px;color:#404040;">8</span>
<span class="t" style="left:1104.67px;top:896.00px;font-size:13px;letter-spacing:0.199px;color:#404040;">3</span>
<span class="t" style="left:1186.67px;top:896.00px;font-size:13px;letter-spacing:0.199px;color:#404040;">7</span>
<span class="t" style="left:19.50px;top:917.00px;font-size:13px;letter-spacing:0.280px;color:#404040;">Orders Adjustment 1 Years Ago</span>
<div class="inp" style="left:218px;top:916px;"></div>
<div class="inp" style="left:300px;top:916px;"></div>
<div class="inp" style="left:382px;top:916px;"></div>
<div class="inp" style="left:464px;top:916px;"></div>
<div class="inp" style="left:546px;top:916px;"></div>
<div class="inp" style="left:628px;top:916px;"></div>
<div class="inp" style="left:710px;top:916px;"></div>
<div class="inp" style="left:792px;top:916px;"></div>
<div class="inp" style="left:874px;top:916px;"></div>
<div class="inp" style="left:956px;top:916px;"></div>
<div class="inp" style="left:1038px;top:916px;"></div>
<div class="inp" style="left:1120px;top:916px;"></div>
<span class="t" style="left:19.50px;top:938.00px;font-size:13px;letter-spacing:0.332px;color:#404040;">Total Orders</span>
<span class="t" style="left:284.67px;top:938.00px;font-size:13px;letter-spacing:0.199px;color:#404040;">0</span>
<span class="t" style="left:366.67px;top:938.00px;font-size:13px;letter-spacing:0.199px;color:#404040;">0</span>
<span class="t" style="left:448.67px;top:938.00px;font-size:13px;letter-spacing:0.199px;color:#404040;">0</span>
<span class="t" style="left:530.67px;top:938.00px;font-size:13px;letter-spacing:0.199px;color:#404040;">0</span>
<span class="t" style="left:612.67px;top:938.00px;font-size:13px;letter-spacing:0.199px;color:#404040;">0</span>
<span class="t" style="left:694.67px;top:938.00px;font-size:13px;letter-spacing:0.199px;color:#404040;">0</span>
<span class="t" style="left:776.67px;top:938.00px;font-size:13px;letter-spacing:0.199px;color:#404040;">0</span>
<span class="t" style="left:858.67px;top:938.00px;font-size:13px;letter-spacing:0.199px;color:#404040;">0</span>
<span class="t" style="left:940.67px;top:938.00px;font-size:13px;letter-spacing:0.199px;color:#404040;">0</span>
<span class="t" style="left:1022.67px;top:938.00px;font-size:13px;letter-spacing:0.199px;color:#404040;">0</span>
<span class="t" style="left:1104.67px;top:938.00px;font-size:13px;letter-spacing:0.199px;color:#404040;">0</span>
<span class="t" style="left:1186.67px;top:938.00px;font-size:13px;letter-spacing:0.199px;color:#404040;">0</span>
<span class="t" style="left:19.50px;top:959.00px;font-size:13px;letter-spacing:0.286px;color:#404040;">Open Orders</span>
<span class="t" style="left:284.67px;top:959.00px;font-size:13px;letter-spacing:0.199px;color:#404040;">0</span>
<span class="t" style="left:366.67px;top:959.00px;font-size:13px;letter-spacing:0.199px;color:#404040;">0</span>
<span class="t" style="left:448.67px;top:959.00px;font-size:13px;letter-spacing:0.199px;color:#404040;">0</span>
<span class="t" style="left:530.67px;top:959.00px;font-size:13px;letter-spacing:0.199px;color:#404040;">0</span>
<span class="t" style="left:612.67px;top:959.00px;font-size:13px;letter-spacing:0.199px;color:#404040;">0</span>
<span class="t" style="left:694.67px;top:959.00px;font-size:13px;letter-spacing:0.199px;color:#404040;">0</span>
<span class="t" style="left:776.67px;top:959.00px;font-size:13px;letter-spacing:0.199px;color:#404040;">0</span>
<span class="t" style="left:858.67px;top:959.00px;font-size:13px;letter-spacing:0.199px;color:#404040;">0</span>
<span class="t" style="left:940.67px;top:959.00px;font-size:13px;letter-spacing:0.199px;color:#404040;">0</span>
<span class="t" style="left:1022.67px;top:959.00px;font-size:13px;letter-spacing:0.199px;color:#404040;">0</span>
<span class="t" style="left:1104.67px;top:959.00px;font-size:13px;letter-spacing:0.199px;color:#404040;">0</span>
<span class="t" style="left:1186.67px;top:959.00px;font-size:13px;letter-spacing:0.199px;color:#404040;">0</span>
<span class="t" style="left:19.50px;top:980.00px;font-size:13px;letter-spacing:0.038px;color:#404040;">Forecast Baseline</span>
<span class="t" style="left:284.67px;top:980.00px;font-size:13px;letter-spacing:0.199px;color:#404040;">8</span>
<span class="t" style="left:366.67px;top:980.00px;font-size:13px;letter-spacing:0.199px;color:#404040;">5</span>
<span class="t" style="left:448.67px;top:980.00px;font-size:13px;letter-spacing:0.199px;color:#404040;">9</span>
<span class="t" style="left:530.67px;top:980.00px;font-size:13px;letter-spacing:0.199px;color:#404040;">7</span>
<span class="t" style="left:605.23px;top:980.00px;font-size:13px;letter-spacing:0.199px;color:#404040;">25</span>
<span class="t" style="left:687.23px;top:980.00px;font-size:13px;letter-spacing:0.199px;color:#404040;">25</span>
<span class="t" style="left:769.23px;top:980.00px;font-size:13px;letter-spacing:0.199px;color:#404040;">27</span>
<span class="t" style="left:858.67px;top:980.00px;font-size:13px;letter-spacing:0.199px;color:#404040;">4</span>
<span class="t" style="left:940.67px;top:980.00px;font-size:13px;letter-spacing:0.199px;color:#404040;">9</span>
<span class="t" style="left:1022.67px;top:980.00px;font-size:13px;letter-spacing:0.199px;color:#404040;">4</span>
<span class="t" style="left:1104.67px;top:980.00px;font-size:13px;letter-spacing:0.199px;color:#404040;">3</span>
<span class="t" style="left:1186.67px;top:980.00px;font-size:13px;letter-spacing:0.199px;color:#404040;">6</span>
<span class="t" style="left:19.50px;top:1001.00px;font-size:13px;letter-spacing:0.174px;color:#404040;">Forecast Override</span>
<div class="inp" style="left:218px;top:1000px;"></div>
<div class="inp" style="left:300px;top:1000px;"></div>
<div class="inp" style="left:382px;top:1000px;"></div>
<div class="inp" style="left:464px;top:1000px;"></div>
<div class="inp" style="left:546px;top:1000px;"></div>
<div class="inp" style="left:628px;top:1000px;"></div>
<div class="inp" style="left:710px;top:1000px;"></div>
<div class="inp" style="left:792px;top:1000px;"></div>
<div class="inp" style="left:874px;top:1000px;"></div>
<div class="inp" style="left:956px;top:1000px;"></div>
<div class="inp" style="left:1038px;top:1000px;"></div>
<div class="inp" style="left:1120px;top:1000px;"></div>
<span class="t" style="left:19.50px;top:1022.00px;font-size:13px;letter-spacing:0.189px;color:#404040;">Total Forecast</span>
<span class="t" style="left:284.67px;top:1022.00px;font-size:13px;letter-spacing:0.199px;color:#404040;">8</span>
<span class="t" style="left:366.67px;top:1022.00px;font-size:13px;letter-spacing:0.199px;color:#404040;">5</span>
<span class="t" style="left:448.67px;top:1022.00px;font-size:13px;letter-spacing:0.199px;color:#404040;">9</span>
<span class="t" style="left:530.67px;top:1022.00px;font-size:13px;letter-spacing:0.199px;color:#404040;">7</span>
<span class="t" style="left:605.23px;top:1022.00px;font-size:13px;letter-spacing:0.199px;color:#404040;">25</span>
<span class="t" style="left:687.23px;top:1022.00px;font-size:13px;letter-spacing:0.199px;color:#404040;">25</span>
<span class="t" style="left:769.23px;top:1022.00px;font-size:13px;letter-spacing:0.199px;color:#404040;">27</span>
<span class="t" style="left:858.67px;top:1022.00px;font-size:13px;letter-spacing:0.199px;color:#404040;">4</span>
<span class="t" style="left:940.67px;top:1022.00px;font-size:13px;letter-spacing:0.199px;color:#404040;">9</span>
<span class="t" style="left:1022.67px;top:1022.00px;font-size:13px;letter-spacing:0.199px;color:#404040;">4</span>
<span class="t" style="left:1104.67px;top:1022.00px;font-size:13px;letter-spacing:0.199px;color:#404040;">3</span>
<span class="t" style="left:1186.67px;top:1022.00px;font-size:13px;letter-spacing:0.199px;color:#404040;">6</span>
<section class="panel" style="left:14px;top:1079px;width:632px;height:194px;"><div class="phead"></div></section>
<span class="t" style="left:29.40px;top:1084.00px;font-size:13px;letter-spacing:0.457px;color:#333;font-weight:700;">Parameters</span>
<span class="t" style="left:37.40px;top:1131.00px;font-size:13px;letter-spacing:0.264px;color:#404040;">Forecast method</span>
<span class="t" style="left:37.40px;top:1179.00px;font-size:13px;letter-spacing:0.282px;color:#404040;">Selected forecast method</span>
<span class="t" style="left:37.40px;top:1213.00px;font-size:13px;letter-spacing:0.320px;color:#404040;">Estimated forecast error</span>
<div class="btn" style="left:383px;top:1131px;width:238px;height:32px;background:#fff;border:1px solid #ccc;"></div>
<span class="t" style="left:461.00px;top:1138.00px;font-size:13px;letter-spacing:0.469px;color:#404040;">automatic</span>
<svg class="abs" style="left:535px;top:1146.6px;" width="9" height="5" viewBox="0 0 9 5"><path d="M0.4 0.3H8L4.2 4.5Z" fill="#333"/></svg>
<span class="t" style="left:383.40px;top:1179.00px;font-size:13px;letter-spacing:0.019px;color:#404040;">seasonal</span>
<span class="t" style="left:383.40px;top:1213.00px;font-size:13px;letter-spacing:0.000px;color:#404040;transform:scaleX(0.9615);transform-origin:0 0;">54 %</span>
</body></html>
